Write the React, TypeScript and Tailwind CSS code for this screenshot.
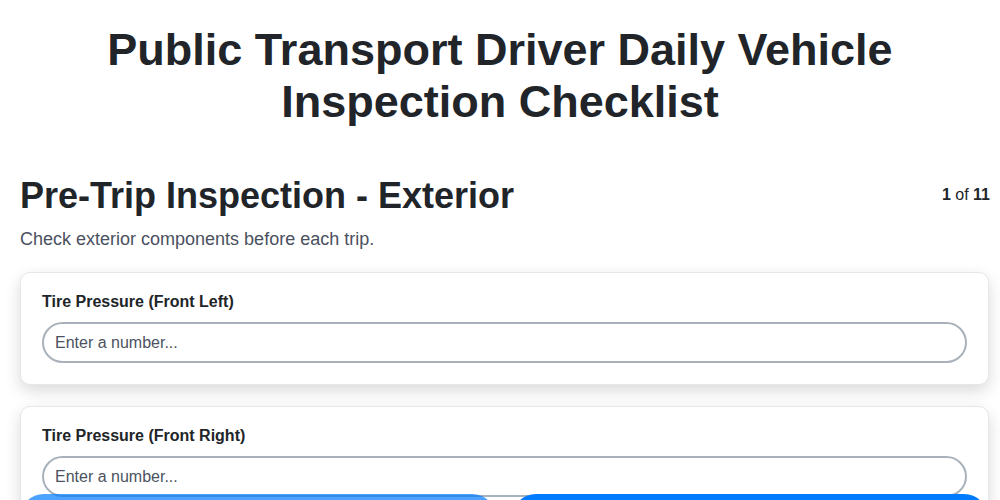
import React from "react";

const fields = [
  { id: "fl", label: "Tire Pressure (Front Left)" },
  { id: "fr", label: "Tire Pressure (Front Right)" },
  { id: "rl", label: "Tire Pressure (Rear Left)" },
];

function NumberField({ label }: { label: string }) {
  return (
    <div className="rounded-[10px] border border-[#e6e7ec] bg-white pt-[17px] px-[21px] pb-[21px] shadow-[0_6px_16px_rgba(0,0,0,0.15)]">
      <label className="block text-[16px] leading-[24px] font-bold text-[#212529]">{label}</label>
      <input
        type="text"
        placeholder="Enter a number..."
        className="mt-[8px] block h-[41px] w-full rounded-full border-2 border-[#a9b2bb] bg-white px-[11px] text-[16px] text-[#212529] placeholder:text-[#4b5260] outline-none"
      />
    </div>
  );
}

export default function App() {
  return (
    <div className="min-h-screen bg-white text-[#212529]" style={{ fontFamily: '"Liberation Sans", Arial, sans-serif' }}>
      <h1 className="pt-[24px] px-10 text-center text-[45px] leading-[52px] font-bold text-[#212529]">
        Public Transport Driver Daily Vehicle Inspection Checklist
      </h1>

      <main className="mt-[46px] pl-5 pr-[11px]">
        <div className="flex items-start justify-between">
          <h2 className="text-[36px] leading-[44px] font-bold text-[#212529]">Pre-Trip Inspection - Exterior</h2>
          <div className="mt-[9px] -mr-[1px] text-[16px] text-[#212529]">
            <span className="font-bold">1</span> of <span className="font-bold">11</span>
          </div>
        </div>
        <p className="mt-[8px] text-[18px] leading-[26px] text-[#4a5060]">Check exterior components before each trip.</p>

        <div className="mt-[20px] flex flex-col gap-[21px]">
          {fields.map((f) => (
            <NumberField key={f.id} label={f.label} />
          ))}
        </div>
      </main>

      <nav className="fixed bottom-0 left-0 right-0 translate-y-[42px] flex gap-[16px] pl-5 pr-3">
        <button className="h-12 flex-1 rounded-full bg-[#007bff] opacity-70 text-white font-bold text-[16px]">Previous</button>
        <button className="h-12 flex-1 rounded-full bg-[#007bff] text-white font-bold text-[16px]">Next</button>
      </nav>
    </div>
  );
}
